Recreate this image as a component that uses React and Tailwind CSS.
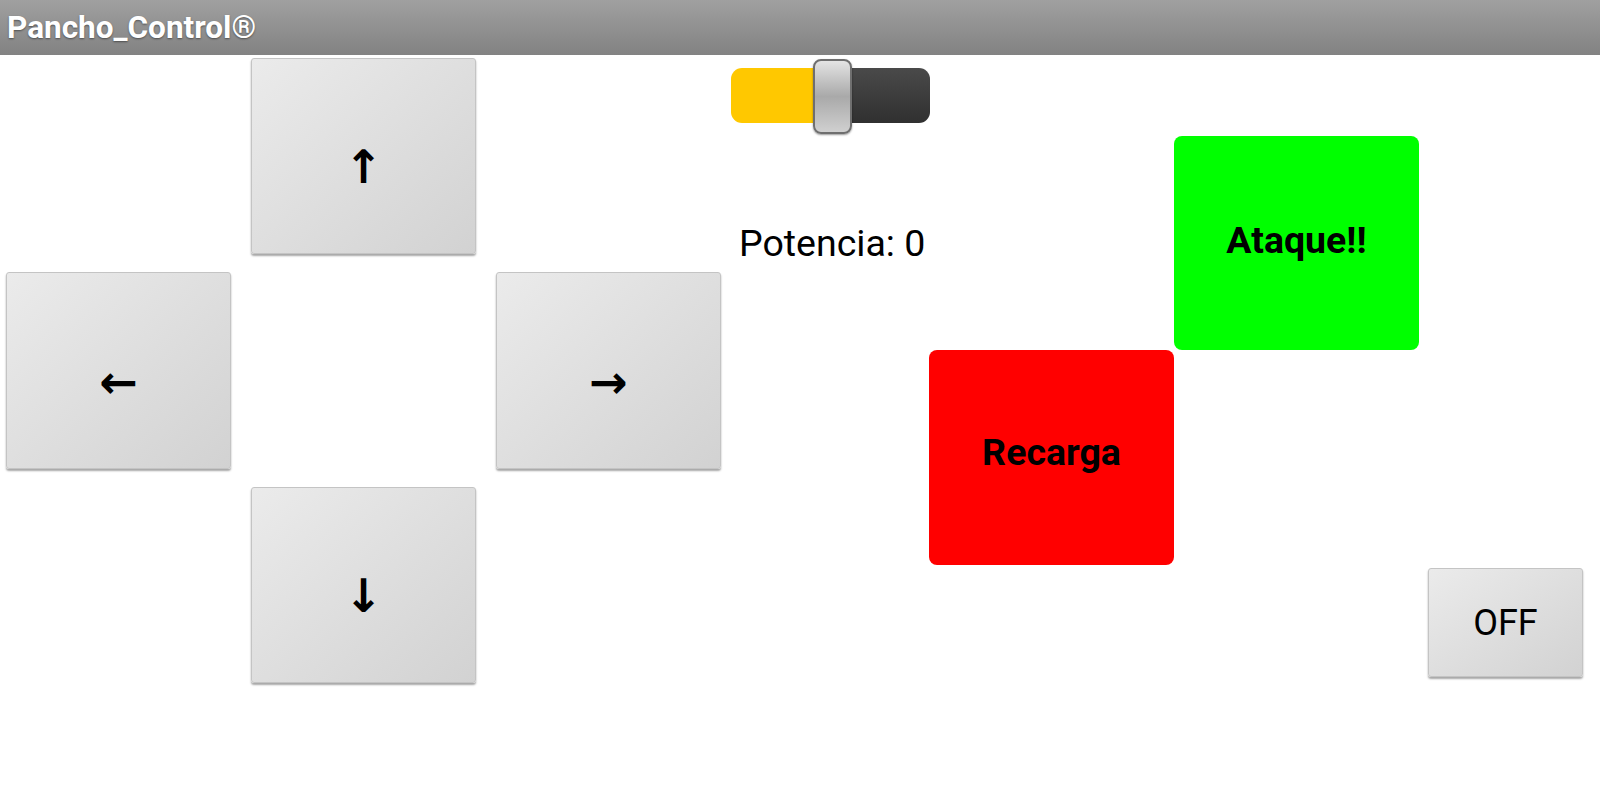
import { useState } from "react";

const font = { fontFamily: "Roboto, 'Noto Sans', 'DejaVu Sans', sans-serif" };

function GrayButton({ children, className = "" }) {
     return (
          <button
               className={`flex items-center justify-center rounded-[3px] border border-[#c4c4c4] bg-gradient-to-br from-[#ebebeb] to-[#d2d2d2] shadow-[0_2px_2px_rgba(0,0,0,0.35)] text-black ${className}`}
          >
               {children}
          </button>
     );
}

function Slider({ value }) {
     return (
          <div className="relative h-[75px] w-[199px]">
               <div className="absolute left-0 top-[9px] flex h-[55px] w-[199px] overflow-hidden rounded-[11px]">
                    <div className="h-full w-[90px] bg-[#ffc800]" />
                    <div className="h-full flex-1 bg-gradient-to-b from-[#4a4a4a] to-[#303030]" />
               </div>
               <div
                    className="absolute top-0 h-[75px] w-[39px] rounded-[8px] border-2 border-[#6f6f6f] bg-gradient-to-b from-[#e4e4e4] via-[#a9a9a9] to-[#d0d0d0] shadow-[0_1px_2px_rgba(0,0,0,0.4)]"
                    style={{ left: 82 + value }}
               />
          </div>
     );
}

export default function App() {
     const [power] = useState(0);

     return (
          <div className="h-[795px] w-[1600px] overflow-hidden bg-white" style={font}>
               <div className="flex h-[55px] items-center bg-gradient-to-b from-[#a0a0a0] to-[#828282] pl-[7px]">
                    <span className="text-[31.5px] font-bold text-white [text-shadow:0_1px_2px_rgba(0,0,0,0.45)]">
                         Pancho_Control®
                    </span>
               </div>

               <div className="flex">
                    {/* d-pad */}
                    <div className="ml-[6px] mt-[3px] grid grid-cols-[225px_225px_225px] grid-rows-[196px_197px_196px] gap-x-[20px] gap-y-[18px] text-[46px] font-bold leading-none">
                         <div />
                         <GrayButton className="pt-[22px]">↑</GrayButton>
                         <div />
                         <GrayButton className="pt-[22px]">←</GrayButton>
                         <div />
                         <GrayButton className="pt-[22px]">→</GrayButton>
                         <div />
                         <GrayButton className="pt-[22px]">↓</GrayButton>
                         <div />
                    </div>

                    {/* power */}
                    <div className="ml-[10px] mt-[4px] flex w-[198px] flex-col">
                         <Slider value={power} />
                         <div className="ml-[8px] mt-[91px] whitespace-nowrap text-[37.5px] leading-none text-black">
                              Potencia: {power}
                         </div>
                    </div>

                    {/* actions */}
                    <div className="mt-[81px] grid grid-cols-[245px_245px] grid-rows-[214px_215px]">
                         <div />
                         <button className="flex items-center justify-center rounded-[8px] bg-[#00ff00] pb-[5px] text-[37.5px] font-bold text-black">
                              Ataque!!
                         </button>
                         <button className="flex items-center justify-center rounded-[8px] bg-[#ff0000] pb-[10px] text-[37.5px] font-bold text-black">
                              Recarga
                         </button>
                         <div />
                    </div>

                    <div className="ml-[9px] mt-[513px]">
                         <GrayButton className="h-[109px] w-[155px] text-[36px]">OFF</GrayButton>
                    </div>
               </div>
          </div>
     );
}
